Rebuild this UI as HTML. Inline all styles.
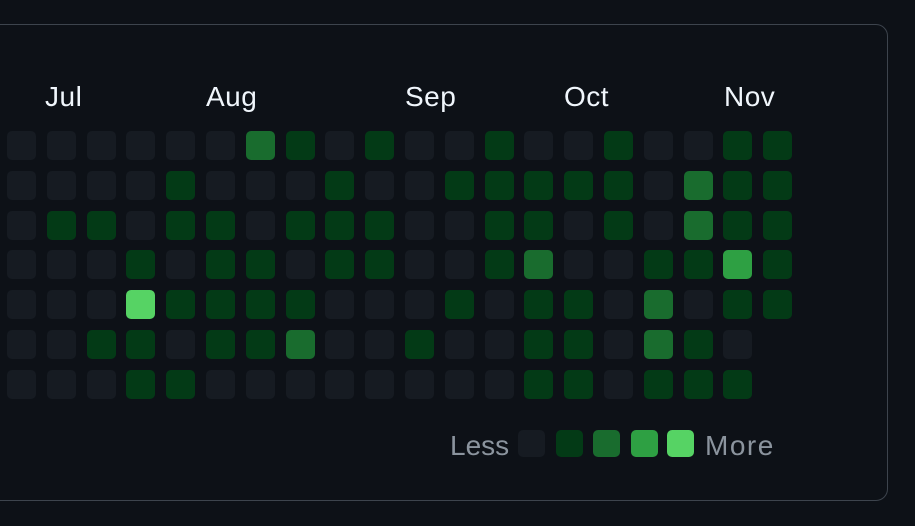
<!DOCTYPE html>
<html><head><style>
html,body{margin:0;padding:0;background:#0d1117;width:915px;height:526px;overflow:hidden;font-family:"Liberation Sans",sans-serif}
.card{position:absolute;left:-20px;top:24px;width:908px;height:477px;border:1.5px solid #3d444d;border-radius:12px;box-sizing:border-box}
.m{position:absolute;top:81px;color:#f0f6fc;font-size:28px;letter-spacing:0.5px}
.c{position:absolute;width:29px;height:29px;border-radius:5px}
.l{position:absolute;top:430px;color:#8b949e;font-size:28px;letter-spacing:1.5px}
.s{position:absolute;top:430px;width:27px;height:27px;border-radius:5px}
</style></head><body>
<div class="card"></div>
<div class="m" style="left:45px">Jul</div>
<div class="m" style="left:206px">Aug</div>
<div class="m" style="left:405px">Sep</div>
<div class="m" style="left:564px">Oct</div>
<div class="m" style="left:724px">Nov</div>
<div id="g"></div>
<div class="l" style="left:450px;letter-spacing:0">Less</div>
<div class="s" style="left:518px;background:#161b22"></div>
<div class="s" style="left:556px;background:#033a16"></div>
<div class="s" style="left:593px;background:#196c2e"></div>
<div class="s" style="left:631px;background:#2ea043"></div>
<div class="s" style="left:667px;background:#56d364"></div>
<div class="l" style="left:705px">More</div>
<script>
var rows=["00000021010010010011","00001000100111110211","01101101110011010211","00010110110012001131","00041111000101102011","0011011200100110210-","0001100000000110111-"];
var col=["#161b22","#033a16","#196c2e","#2ea043","#56d364"];
var h="";
for(var r=0;r<7;r++)for(var c=0;c<20;c++){var v=rows[r][c];if(v=="-")continue;
h+='<div class="c" style="left:'+Math.round(7+c*39.8)+'px;top:'+Math.round(131+r*39.8)+'px;background:'+col[+v]+'"></div>';}
document.getElementById("g").innerHTML=h;
</script>
</body></html>
